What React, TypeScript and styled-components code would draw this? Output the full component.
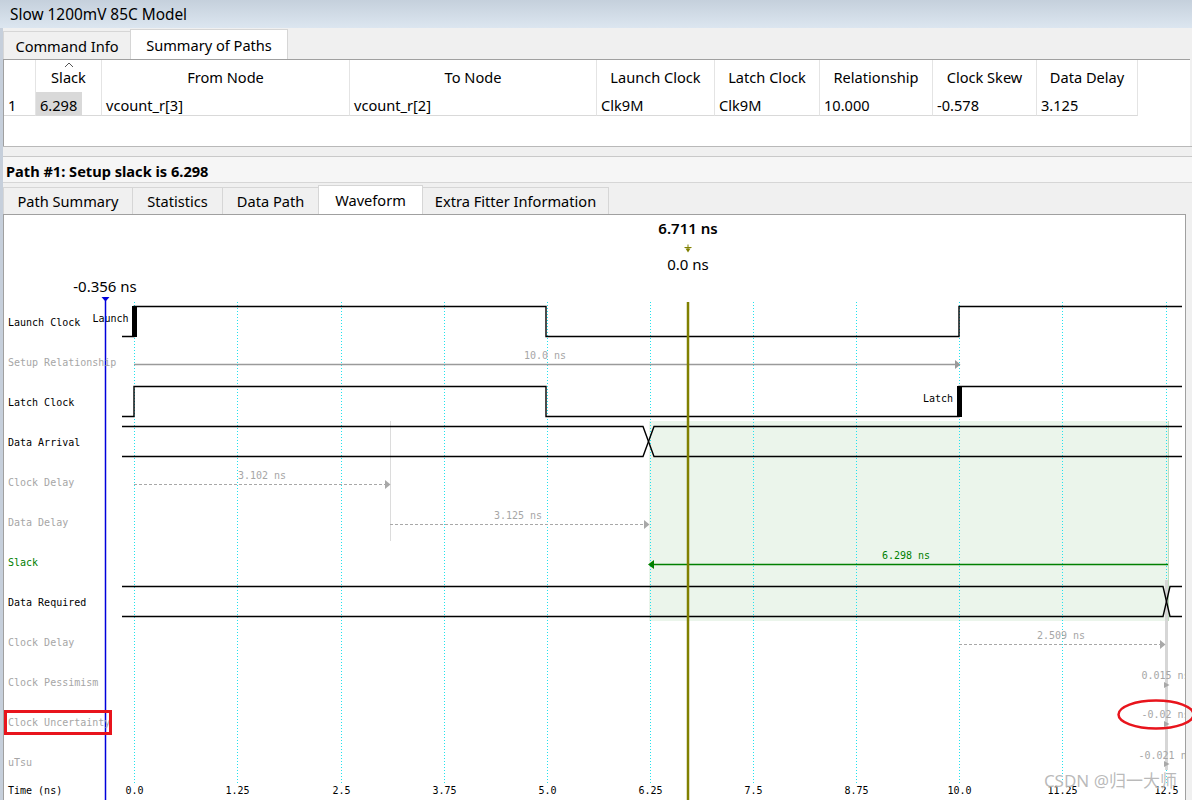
import React from 'react';
import styled, { createGlobalStyle } from 'styled-components';

const UI_FONT = `'Noto Sans', 'Liberation Sans', sans-serif`;
const MONO_FONT = `'DejaVu Sans Mono', 'Liberation Mono', monospace`;

const GlobalStyle = createGlobalStyle`
  html, body {
    margin: 0;
    padding: 0;
    background: #f0f0f0;
  }
  body {
    font-family: ${UI_FONT};
    font-size: 14.6px;
    color: #000;
  }
`;

const Window = styled.div`
  width: 1192px;
  height: 800px;
  display: flex;
  flex-direction: column;
  overflow: hidden;
`;

const TitleBar = styled.div`
  flex: none;
  height: 28px;
  display: flex;
  align-items: center;
  padding-left: 10px;
  background: linear-gradient(#c5d0dc, #dce6f0);
  font-size: 15.4px;
`;

const Body = styled.div`
  flex: 1;
  min-height: 0;
  display: flex;
  flex-direction: column;
  border-left: 3px solid #c6cfdb;
`;

const TabStrip = styled.div<{ $height: number }>`
  flex: none;
  height: ${({ $height }) => $height}px;
  display: flex;
  align-items: flex-end;
  background: #f0f0f0;
`;

const Tab = styled.div<{ $active?: boolean; $width: number; $tall: number }>`
  box-sizing: border-box;
  width: ${({ $width }) => $width}px;
  height: ${({ $active, $tall }) => ($active ? $tall : $tall - 2)}px;
  display: flex;
  align-items: center;
  justify-content: center;
  margin-right: -1px;
  border: 1px solid #d6d6d6;
  border-bottom: none;
  background: ${({ $active }) => ($active ? '#ffffff' : '#f0f0f0')};
  white-space: nowrap;
`;

const TablePanel = styled.div`
  flex: none;
  box-sizing: border-box;
  height: 87px;
  margin-right: 2px;
  background: #ffffff;
  border-top: 1px solid #a0a0a0;
  border-left: 1px solid #a0a0a0;
`;

const TableGrid = styled.div<{ $columns: string }>`
  display: grid;
  grid-template-columns: ${({ $columns }) => $columns};
`;

const HeadCell = styled.div`
  position: relative;
  box-sizing: border-box;
  height: 32px;
  display: flex;
  align-items: center;
  justify-content: center;
  padding-top: 2px;
  border-right: 1px solid #e4e4e4;
  white-space: nowrap;
`;

const SortMark = styled.svg`
  position: absolute;
  top: 2px;
  left: 50%;
  transform: translateX(-50%);
`;

const DataCell = styled.div<{ $flush?: boolean }>`
  box-sizing: border-box;
  height: 24px;
  display: flex;
  align-items: center;
  padding-left: ${({ $flush }) => ($flush ? 0 : 4)}px;
  padding-top: ${({ $flush }) => ($flush ? 0 : 2)}px;
  border-right: 1px solid #e4e4e4;
  border-bottom: 1px solid #d9d9d9;
  white-space: nowrap;
`;

const SelectedValue = styled.span`
  box-sizing: border-box;
  width: 46px;
  height: 100%;
  display: flex;
  align-items: center;
  padding: 2px 0 0 4px;
  background: #d9d9d9;
`;

const Splitter = styled.div`
  flex: none;
  box-sizing: border-box;
  height: 11px;
  background: #f0f0f0;
  border-top: 1px solid #b9b9b9;
  border-bottom: 1px solid #c9c9c9;
`;

const PathHeader = styled.div`
  flex: none;
  box-sizing: border-box;
  height: 26px;
  display: flex;
  align-items: center;
  padding: 3px 0 0 3px;
  background: #f6f6f6;
  border-bottom: 1px solid #d6d6d6;
  font-weight: 700;
`;

const WaveformPanel = styled.div`
  flex: 1;
  min-height: 0;
  position: relative;
  display: flex;
  margin-right: 6px;
  background: #ffffff;
  border: 1px solid #a0a0a0;
  border-bottom: none;
`;

const LabelColumn = styled.div`
  flex: none;
  width: 101px;
  padding-top: 88px;
  display: flex;
  flex-direction: column;
  font-family: ${MONO_FONT};
  font-size: 10px;
`;

type Tone = 'main' | 'muted' | 'slack';

const toneColor: Record<Tone, string> = {
  main: '#000000',
  muted: '#a6a6a6',
  slack: '#008000',
};

const RowLabel = styled.div<{ $tone: Tone; $marked?: boolean }>`
  position: relative;
  height: 40px;
  line-height: 40px;
  padding-left: 4px;
  white-space: nowrap;
  color: ${({ $tone }) => toneColor[$tone]};

  ${({ $marked }) =>
    $marked &&
    `
    &::after {
      content: '';
      position: absolute;
      left: 0;
      top: 7px;
      width: 108px;
      height: 25px;
      box-sizing: border-box;
      border: 3px solid #e8141c;
    }
  `}
`;

const TimeLabel = styled.div`
  height: 16px;
  line-height: 16px;
  padding-left: 4px;
  white-space: nowrap;
`;

const Chart = styled.svg`
  flex: none;
  display: block;
  overflow: visible;
`;

const MonoText = styled.text<{ $tone: Tone }>`
  font-family: ${MONO_FONT};
  font-size: 10px;
  fill: ${({ $tone }) => toneColor[$tone]};
`;

const CursorText = styled.text<{ $strong?: boolean }>`
  font-family: ${UI_FONT};
  font-size: 15px;
  font-weight: ${({ $strong }) => ($strong ? 600 : 400)};
  fill: #000;
`;

const Watermark = styled.div`
  position: absolute;
  right: 8px;
  bottom: 9px;
  font-family: 'Noto Sans', 'Noto Sans CJK SC', sans-serif;
  font-size: 17px;
  line-height: 20px;
  color: rgba(140, 140, 140, 0.6);
  text-shadow: 0 0 1px #fff;
  white-space: nowrap;
`;

const topTabs = [
  { label: 'Command Info', width: 128 },
  { label: 'Summary of Paths', width: 158, active: true },
];

const detailTabs = [
  { label: 'Path Summary', width: 130 },
  { label: 'Statistics', width: 91 },
  { label: 'Data Path', width: 97 },
  { label: 'Waveform', width: 105, active: true },
  { label: 'Extra Fitter Information', width: 187 },
];

const columns = [
  { title: '', width: 32 },
  { title: 'Slack', width: 66, sorted: true },
  { title: 'From Node', width: 248 },
  { title: 'To Node', width: 247 },
  { title: 'Launch Clock', width: 118 },
  { title: 'Latch Clock', width: 105 },
  { title: 'Relationship', width: 113 },
  { title: 'Clock Skew', width: 104 },
  { title: 'Data Delay', width: 101 },
];

const pathRow = ['1', '6.298', 'vcount_r[3]', 'vcount_r[2]', 'Clk9M', 'Clk9M', '10.000', '-0.578', '3.125'];

const rowLabels: { text: string; tone: Tone; marked?: boolean }[] = [
  { text: 'Launch Clock', tone: 'main' },
  { text: 'Setup Relationship', tone: 'muted' },
  { text: 'Latch Clock', tone: 'main' },
  { text: 'Data Arrival', tone: 'main' },
  { text: 'Clock Delay', tone: 'muted' },
  { text: 'Data Delay', tone: 'muted' },
  { text: 'Slack', tone: 'slack' },
  { text: 'Data Required', tone: 'main' },
  { text: 'Clock Delay', tone: 'muted' },
  { text: 'Clock Pessimism', tone: 'muted' },
  { text: 'Clock Uncertainty', tone: 'muted', marked: true },
  { text: 'uTsu', tone: 'muted' },
];

const ticks = [0, 1.25, 2.5, 3.75, 5, 6.25, 7.5, 8.75, 10, 11.25, 12.5];
const xAt = (t: number) => Math.round(134.3 + 82.5 * t);
const tickText = (t: number) => (t % 1 === 0 ? t.toFixed(1) : String(t));

const GRID_TOP = 302;
const GRID_BOTTOM = 784;

// clock: low stub, rise at 0ns, fall at 5ns, rise at 10ns
const clockPath = (high: number, low: number) =>
  `M122 ${low} H134 V${high} H546 V${low} H959 V${high} H1182`;

// bus with a crossing between x0 and x1
const busPaths = (top: number, bottom: number, x0: number, x1: number) => [
  `M122 ${top} H${x0} L${x1} ${bottom} H1182`,
  `M122 ${bottom} H${x0} L${x1} ${top} H1182`,
];

const RightHead: React.FC<{ tip: number; y: number; color: string; size?: number }> = ({
  tip,
  y,
  color,
  size = 4.5,
}) => <polygon points={`${tip - 5},${y - size} ${tip - 5},${y + size} ${tip + 0.5},${y}`} fill={color} />;

const DashedSpan: React.FC<{ from: number; to: number; y: number; label: string; labelX: number }> = ({
  from,
  to,
  y,
  label,
  labelX,
}) => (
  <g>
    <line x1={from} y1={y} x2={to - 4} y2={y} stroke="#a8a8a8" strokeDasharray="3 2" />
    <RightHead tip={to} y={y} color="#a8a8a8" />
    <MonoText $tone="muted" x={labelX} y={y - 5.5} textAnchor="middle">
      {label}
    </MonoText>
  </g>
);

const Waveform: React.FC = () => {
  const arrival = busPaths(426.5, 456.5, 643, 654);
  const required = busPaths(586.5, 616.5, 1163, 1170);

  return (
    <Chart width={1080} height={585} viewBox="105 215 1080 585">
      <defs>
        <clipPath id="plot-area">
          <rect x={105} y={215} width={1080} height={585} />
        </clipPath>
      </defs>

      {/* slack region */}
      <rect x={649} y={421} width={519} height={200} fill="#ebf5eb" />
      <line x1={1168.5} y1={421} x2={1168.5} y2={621} stroke="#bddcbd" />

      {ticks.map((t) => (
        <line
          key={t}
          x1={xAt(t) + 0.5}
          y1={GRID_TOP}
          x2={xAt(t) + 0.5}
          y2={GRID_BOTTOM}
          stroke="#22e2ee"
          strokeDasharray="1 2"
        />
      ))}

      <rect x={1165} y={580} width={3} height={190} fill="#d6d6d6" />
      <line x1={390.5} y1={421} x2={390.5} y2={541} stroke="#dcdcdc" />

      {/* launch clock */}
      <path d={clockPath(306.5, 336.5)} fill="none" stroke="#000" strokeWidth={1.4} />
      <rect x={132} y={306} width={5} height={31} fill="#000" />
      <MonoText $tone="main" x={128.5} y={322} textAnchor="end">
        Launch
      </MonoText>

      {/* setup relationship */}
      <line x1={134} y1={364.5} x2={955} y2={364.5} stroke="#9a9a9a" strokeWidth={1.4} />
      <RightHead tip={960} y={364.5} color="#9a9a9a" />
      <MonoText $tone="muted" x={545} y={359} textAnchor="middle">
        10.0 ns
      </MonoText>

      {/* latch clock */}
      <path d={clockPath(386.5, 416.5)} fill="none" stroke="#000" strokeWidth={1.4} />
      <rect x={957} y={386} width={5} height={31} fill="#000" />
      <MonoText $tone="main" x={953} y={402} textAnchor="end">
        Latch
      </MonoText>

      {/* data arrival */}
      {arrival.map((d) => (
        <path key={d} d={d} fill="none" stroke="#000" strokeWidth={1.4} />
      ))}

      <DashedSpan from={134} to={390} y={484.5} label="3.102 ns" labelX={262} />
      <DashedSpan from={390} to={649} y={524.5} label="3.125 ns" labelX={518} />

      {/* slack */}
      <line x1={653} y1={564.5} x2={1168} y2={564.5} stroke="#008000" strokeWidth={1.4} />
      <polygon points="648,564.5 654,560 654,569" fill="#008000" />
      <MonoText $tone="slack" x={906} y={559} textAnchor="middle">
        6.298 ns
      </MonoText>

      {/* data required */}
      {required.map((d) => (
        <path key={d} d={d} fill="none" stroke="#000" strokeWidth={1.4} />
      ))}

      <DashedSpan from={959} to={1165} y={644.5} label="2.509 ns" labelX={1061} />

      <g clipPath="url(#plot-area)">
        <MonoText $tone="muted" x={1141.5} y={679}>
          0.015 ns
        </MonoText>
        <MonoText $tone="muted" x={1141.5} y={718}>
          -0.02 ns
        </MonoText>
        <MonoText $tone="muted" x={1138.5} y={759}>
          -0.021 ns
        </MonoText>
      </g>
      <RightHead tip={1169} y={685} color="#a8a8a8" size={3} />
      <RightHead tip={1169} y={724} color="#a8a8a8" size={3} />
      <RightHead tip={1169} y={764} color="#a8a8a8" size={3} />

      {/* start cursor */}
      <line x1={105.5} y1={298} x2={105.5} y2={800} stroke="#0000dc" strokeWidth={1.5} />
      <polygon points="101.5,297 109.5,297 105.5,301.5" fill="#0000dc" />
      <CursorText x={105} y={292} textAnchor="middle">
        -0.356 ns
      </CursorText>

      {/* time cursor */}
      <line x1={688} y1={302} x2={688} y2={800} stroke="#808000" strokeWidth={2.5} />
      <path d="M684.5 247.5 H691.5 M688 244.5 V251" stroke="#808000" strokeWidth={1} />
      <polygon points="685.5,248.5 690.5,248.5 688,252.5" fill="#808000" />
      <CursorText $strong x={688} y={234} textAnchor="middle">
        6.711 ns
      </CursorText>
      <CursorText x={688} y={270} textAnchor="middle">
        0.0 ns
      </CursorText>

      {ticks.map((t) => (
        <MonoText key={t} $tone="main" x={xAt(t) + 0.5} y={794} textAnchor="middle">
          {tickText(t)}
        </MonoText>
      ))}

      {/* annotation */}
      <ellipse cx={1156} cy={714.5} rx={37.5} ry={14} fill="none" stroke="#e8141c" strokeWidth={2.5} />
    </Chart>
  );
};

const App: React.FC = () => (
  <>
    <GlobalStyle />
    <Window>
      <TitleBar>Slow 1200mV 85C Model</TitleBar>
      <Body>
        <TabStrip $height={31}>
          {topTabs.map((tab) => (
            <Tab key={tab.label} $width={tab.width} $active={tab.active} $tall={30}>
              {tab.label}
            </Tab>
          ))}
        </TabStrip>

        <TablePanel>
          <TableGrid $columns={columns.map((c) => `${c.width}px`).join(' ')}>
            {columns.map((col, i) => (
              <HeadCell key={i}>
                {col.sorted && (
                  <SortMark width={10} height={6} viewBox="0 0 10 6">
                    <path d="M1 5 L5 1 L9 5" fill="none" stroke="#555" strokeWidth={1} />
                  </SortMark>
                )}
                {col.title}
              </HeadCell>
            ))}
            {pathRow.map((value, i) =>
              i === 1 ? (
                <DataCell key={i} $flush>
                  <SelectedValue>{value}</SelectedValue>
                </DataCell>
              ) : (
                <DataCell key={i}>{value}</DataCell>
              )
            )}
          </TableGrid>
        </TablePanel>

        <Splitter />
        <PathHeader>Path #1: Setup slack is 6.298</PathHeader>

        <TabStrip $height={31}>
          {detailTabs.map((tab) => (
            <Tab key={tab.label} $width={tab.width} $active={tab.active} $tall={29}>
              {tab.label}
            </Tab>
          ))}
        </TabStrip>

        <WaveformPanel>
          <LabelColumn>
            {rowLabels.map((row, i) => (
              <RowLabel key={i} $tone={row.tone} $marked={row.marked}>
                {row.text}
              </RowLabel>
            ))}
            <TimeLabel>Time (ns)</TimeLabel>
          </LabelColumn>
          <Waveform />
          <Watermark>CSDN @归一大师</Watermark>
        </WaveformPanel>
      </Body>
    </Window>
  </>
);

export default App;
